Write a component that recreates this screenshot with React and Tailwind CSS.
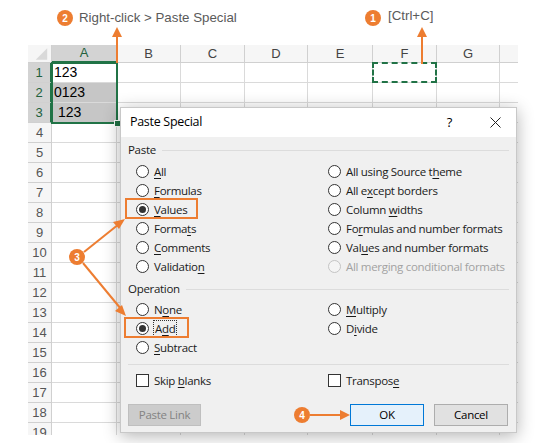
import React from 'react'

const colWidths = [24, 65, 64, 64, 63, 65, 64, 63, 18]
const colLetters = ['', 'A', 'B', 'C', 'D', 'E', 'F', 'G', '']
const cellValues = { 1: '123', 2: '0123', 3: ' 123' }

function Radio({ checked, disabled }) {
  return (
    <span
      className={`w-[13px] h-[13px] rounded-full border flex items-center justify-center shrink-0 ${
        disabled ? 'border-[#c4c4c4] bg-[#f4f4f4]' : 'border-[#333] bg-white'
      }`}
    >
      {checked && <span className="w-[7px] h-[7px] rounded-full bg-[#333]" />}
    </span>
  )
}

// label with one underlined access key
function Label({ text, k }) {
  const i = k ? text.indexOf(k) : -1
  if (i < 0) return <span className="whitespace-pre">{text}</span>
  return (
    <span className="whitespace-pre">
      {text.slice(0, i)}
      <span className="underline underline-offset-2">{k}</span>
      {text.slice(i + 1)}
    </span>
  )
}

function Option({ text, k, checked, disabled, focus }) {
  return (
    <div className={`h-[19px] flex items-center gap-[5px] ${disabled ? 'text-[#a2a2a2]' : 'text-[#1a1a1a]'}`}>
      <Radio checked={checked} disabled={disabled} />
      {focus ? (
        <span className="outline outline-1 outline-dotted outline-[#333] leading-[15px] px-[1px]">
          <Label text={text} k={k} />
        </span>
      ) : (
        <Label text={text} k={k} />
      )}
    </div>
  )
}

function Check({ text, k }) {
  return (
    <div className="h-[19px] flex items-center gap-[5px] text-[#1a1a1a]">
      <span className="w-[13px] h-[13px] border border-[#333] bg-white shrink-0" />
      <Label text={text} k={k} />
    </div>
  )
}

function Badge({ n, className }) {
  return (
    <span
      className={`absolute w-[16px] h-[16px] rounded-full bg-[#ed7d31] text-white text-[10px] font-bold flex items-center justify-center ${className}`}
      style={{ fontFamily: '"Liberation Sans", Arial, sans-serif' }}
    >
      {n}
    </span>
  )
}

function Sheet() {
  const rows = Array.from({ length: 19 }, (_, i) => i + 1)
  return (
    <div className="ml-[28px] relative h-[390px] overflow-hidden" style={{ fontFamily: '"Liberation Sans", Arial, sans-serif' }}>
      <div className="flex h-[18px]">
        {colWidths.map((w, c) => (
          <div
            key={c}
            style={{ width: w }}
            className={`h-full border-b border-r border-[#d0d0d0] flex items-center justify-center text-[13px] ${
              c === 1 ? 'bg-[#d3d3d3] text-[#21613c] border-b-[#217346] border-b-2' : 'bg-[#f6f6f6] text-[#444]'
            } ${c === 8 ? 'border-r-0' : ''}`}
          >
            {c === 0 ? (
              <svg width="24" height="18" viewBox="0 0 24 18">
                <path d="M20 3 L20 15 L8 15 Z" fill="#d9d9d9" />
              </svg>
            ) : (
              colLetters[c]
            )}
          </div>
        ))}
      </div>
      {rows.map((r) => (
        <div key={r} className="flex h-[20px]">
          {colWidths.map((w, c) => {
            if (c === 0)
              return (
                <div
                  key={c}
                  style={{ width: w }}
                  className={`h-full border-b border-r border-[#d0d0d0] flex items-center justify-center text-[13px] ${
                    r <= 3 ? 'bg-[#d3d3d3] text-[#21613c] border-r-[#217346] border-r-2' : 'bg-[#f6f6f6] text-[#555]'
                  }`}
                >
                  {r}
                </div>
              )
            const sel = c === 1 && (r === 2 || r === 3)
            return (
              <div
                key={c}
                style={{ width: w }}
                className={`h-full border-b border-r border-[#dadada] relative flex items-center pl-[2px] text-[14px] text-black whitespace-pre ${
                  sel ? 'bg-[#c6c6c6]' : 'bg-white'
                } ${c === 8 ? 'border-r-0' : ''}`}
              >
                {c === 1 ? cellValues[r] : null}
                {c === 6 && r === 1 && (
                  <span className="absolute -left-px -top-px w-[65px] h-[21px] border-2 border-dashed border-[#217346]" />
                )}
              </div>
            )
          })}
        </div>
      ))}
      {/* selection A1:A3 */}
      <div className="absolute left-[23px] top-[17px] w-[67px] h-[62px] border-2 border-[#217346]" />
      <div className="absolute left-[86px] top-[75px] w-[7px] h-[7px] bg-[#217346] border border-white" />
    </div>
  )
}

function Dialog() {
  return (
    <div
      className="absolute left-[120px] top-[107px] w-[397px] h-[326px] flex flex-col bg-[#f0f0f0] border border-[#c8c8c8] shadow-[0_3px_16px_rgba(0,0,0,0.3)] text-[11.5px] tracking-[-0.3px]"
      style={{ fontFamily: '"Open Sans", "Noto Sans", sans-serif' }}
    >
      <div className="h-[29px] bg-white flex items-center pl-[9px] text-[12.5px] text-black">
        <span>Paste Special</span>
        <span className="ml-auto mr-[38px] text-[13px]">?</span>
        <svg width="11" height="11" viewBox="0 0 11 11" className="mr-[15px]">
          <path d="M0.5 0.5 L10.5 10.5 M10.5 0.5 L0.5 10.5" stroke="#222" strokeWidth="1" />
        </svg>
      </div>
      <div className="flex-1 flex flex-col px-[7px] pt-[5px]">
        <div className="h-[16px] flex items-center gap-[6px] text-[#1a1a1a]">
          <span>Paste</span>
          <span className="flex-1 h-px bg-[#dcdcdc]" />
        </div>
        <div className="mt-[4px] ml-[8px] grid grid-cols-[192px_1fr]">
          <div className="flex flex-col">
            <Option text="All" k="A" />
            <Option text="Formulas" k="F" />
            <Option text="Values" k="V" checked />
            <Option text="Formats" k="t" />
            <Option text="Comments" k="C" />
            <Option text="Validation" k="n" />
          </div>
          <div className="flex flex-col">
            <Option text="All using Source theme" k="h" />
            <Option text="All except borders" k="x" />
            <Option text="Column widths" k="w" />
            <Option text="Formulas and number formats" k="r" />
            <Option text="Values and number formats" k="u" />
            <Option text="All merging conditional formats" disabled />
          </div>
        </div>
        <div className="mt-[5px] h-[16px] flex items-center gap-[6px] text-[#1a1a1a]">
          <span>Operation</span>
          <span className="flex-1 h-px bg-[#dcdcdc]" />
        </div>
        <div className="mt-[3px] ml-[8px] grid grid-cols-[192px_1fr]">
          <div className="flex flex-col">
            <Option text="None" k="o" />
            <Option text="Add" k="d" checked focus />
            <Option text="Subtract" k="S" />
          </div>
          <div className="flex flex-col">
            <Option text="Multiply" k="M" />
            <Option text="Divide" k="i" />
          </div>
        </div>
        <div className="mt-[7px] h-px bg-[#dcdcdc]" />
        <div className="mt-[6px] ml-[8px] grid grid-cols-[192px_1fr]">
          <Check text="Skip blanks" k="b" />
          <Check text="Transpose" k="e" />
        </div>
        <div className="mt-[14px] flex items-center">
          <button className="w-[73px] h-[22px] bg-[#cccccc] border border-[#bfbfbf] text-[#838383]">Paste Link</button>
          <button className="ml-auto w-[74px] h-[22px] bg-[#e5f1fb] border border-[#0078d7] text-black">OK</button>
          <button className="ml-[10px] mr-[1px] w-[74px] h-[22px] bg-[#e1e1e1] border border-[#adadad] text-black">Cancel</button>
        </div>
      </div>
    </div>
  )
}

export default function App() {
  return (
    <div className="relative w-[539px] h-[443px] overflow-hidden bg-white">
      <div className="h-[45px]" />
      <Sheet />
      <Dialog />

      {/* annotations */}
      <div
        className="absolute left-0 top-0 w-full h-full pointer-events-none text-[13.3px] text-[#5a5a5a]"
        style={{ fontFamily: '"Liberation Sans", Arial, sans-serif' }}
      >
        <Badge n="2" className="left-[57px] top-[10px]" />
        <span className="absolute left-[79px] top-[10px] leading-[16px]">Right-click &gt; Paste Special</span>
        <Badge n="1" className="left-[365px] top-[10px]" />
        <span className="absolute left-[388px] top-[8px] leading-[16px]">[Ctrl+C]</span>
        <Badge n="3" className="left-[69px] top-[249px]" />
        <Badge n="4" className="left-[294px] top-[407px]" />

        <span className="absolute left-[125px] top-[198px] w-[73px] h-[21px] border-2 border-[#ed7d31]" />
        <span className="absolute left-[124px] top-[317px] w-[65px] h-[21px] border-2 border-[#ed7d31]" />

        <svg className="absolute left-0 top-0" width="539" height="443" viewBox="0 0 539 443">
          <g stroke="#ed7d31" strokeWidth="2" fill="#ed7d31">
            <line x1="117" y1="63" x2="117" y2="34" />
            <path d="M117 27 L112 37 L122 37 Z" stroke="none" />
            <line x1="422" y1="64" x2="422" y2="34" />
            <path d="M422 27 L417 37 L427 37 Z" stroke="none" />
            <line x1="84" y1="252" x2="119" y2="224" />
            <path d="M125 219 L113 222 L119 229 Z" stroke="none" />
            <line x1="83" y1="263" x2="121" y2="309" />
            <path d="M126 316 L115 311 L122 305 Z" stroke="none" />
            <line x1="310" y1="415" x2="342" y2="415" />
            <path d="M350 415 L340 410 L340 420 Z" stroke="none" />
          </g>
        </svg>
      </div>
    </div>
  )
}
